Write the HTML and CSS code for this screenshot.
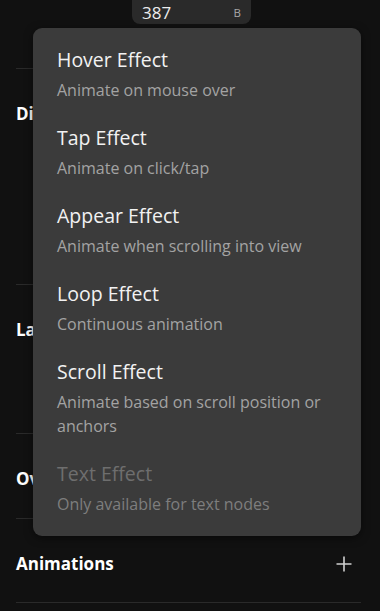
FILE: index.html
```html
<!DOCTYPE html>
<html>
<head>
<meta charset="utf-8">
<link rel="stylesheet" href="styles.css">
</head>
<body>
<div class="panel">
  <div class="top-row">
    <div class="field">
      <span class="field-value">387</span>
      <span class="field-unit">B</span>
    </div>
  </div>
  <section class="section sec-dim">
    <h3 class="label">Dimensions</h3>
  </section>
  <section class="section sec-layout">
    <h3 class="label">Layout</h3>
  </section>
  <section class="section sec-over">
    <h3 class="label">Overflow</h3>
  </section>
  <section class="section sec-anim">
    <h3 class="label">Animations</h3>
    <svg class="plus" width="18" height="18" viewBox="0 0 18 18"><path d="M9 1.5v15M1.5 9h15" stroke="#d0d0d0" stroke-width="1.6" fill="none"/></svg>
  </section>
</div>

<div class="menu">
  <div class="item">
    <div class="title">Hover Effect</div>
    <div class="desc">Animate on mouse over</div>
  </div>
  <div class="item">
    <div class="title">Tap Effect</div>
    <div class="desc">Animate on click/tap</div>
  </div>
  <div class="item">
    <div class="title">Appear Effect</div>
    <div class="desc">Animate when scrolling into view</div>
  </div>
  <div class="item">
    <div class="title">Loop Effect</div>
    <div class="desc">Continuous animation</div>
  </div>
  <div class="item">
    <div class="title">Scroll Effect</div>
    <div class="desc">Animate based on scroll position or anchors</div>
  </div>
  <div class="item disabled">
    <div class="title">Text Effect</div>
    <div class="desc">Only available for text nodes</div>
  </div>
</div>
</body>
</html>
```
FILE: styles.css
```css
html, body {
  margin: 0;
  padding: 0;
  background: #111111;
  height: 100%;
  overflow: hidden;
}
body {
  font-family: "Open Sans", "Noto Sans", sans-serif;
  color: #f0f0f0;
}
.panel {
  padding: 0 19px 0 16px;
}
.top-row {
  height: 68px;
  display: flex;
  padding-left: 116px;
}
.field {
  width: 119px;
  height: 28px;
  margin-top: -4px;
  background: #2a2a2a;
  border-radius: 0 0 8px 8px;
  display: flex;
  align-items: center;
  justify-content: space-between;
  padding: 0 10px 0 10px;
  box-sizing: border-box;
}
.field-value {
  font-size: 17px;
  color: #ececec;
  padding-top: 4px;
}
.field-unit {
  font-size: 11.5px;
  color: #a8a8a8;
  padding-top: 4px;
}
.section {
  border-top: 1px solid #2a2a2a;
  box-sizing: border-box;
  display: flex;
  align-items: flex-start;
  justify-content: space-between;
  padding-top: 34px;
}
.sec-dim { height: 216px; }
.sec-layout { height: 149px; }
.sec-over { height: 85px; }
.sec-anim { height: 85px; border-bottom: 1px solid #2a2a2a; }
.label {
  margin: 0;
  font-size: 17px;
  line-height: 22px;
  font-weight: 700;
  color: #ffffff;
}
.plus {
  margin-top: 2px;
  margin-right: 8px;
}
.menu {
  position: absolute;
  left: 33px;
  top: 28px;
  width: 328px;
  height: 508px;
  box-sizing: border-box;
  background: #3b3b3b;
  border-radius: 9px;
  padding: 7px 0;
  box-shadow: 0 2px 8px rgba(0,0,0,0.5);
}
.item {
  padding: 12px 24px;
  display: flex;
  flex-direction: column;
  gap: 4px;
}
.title {
  font-size: 19.5px;
  line-height: 26px;
  color: #f2f2f2;
}
.desc {
  font-size: 16px;
  line-height: 24px;
  color: #a3a3a3;
  padding-top: 1px;
  margin-bottom: -1px;
}
.disabled .title { color: #6e6e6e; }
.disabled .desc { color: #7e7e7e; }
```
